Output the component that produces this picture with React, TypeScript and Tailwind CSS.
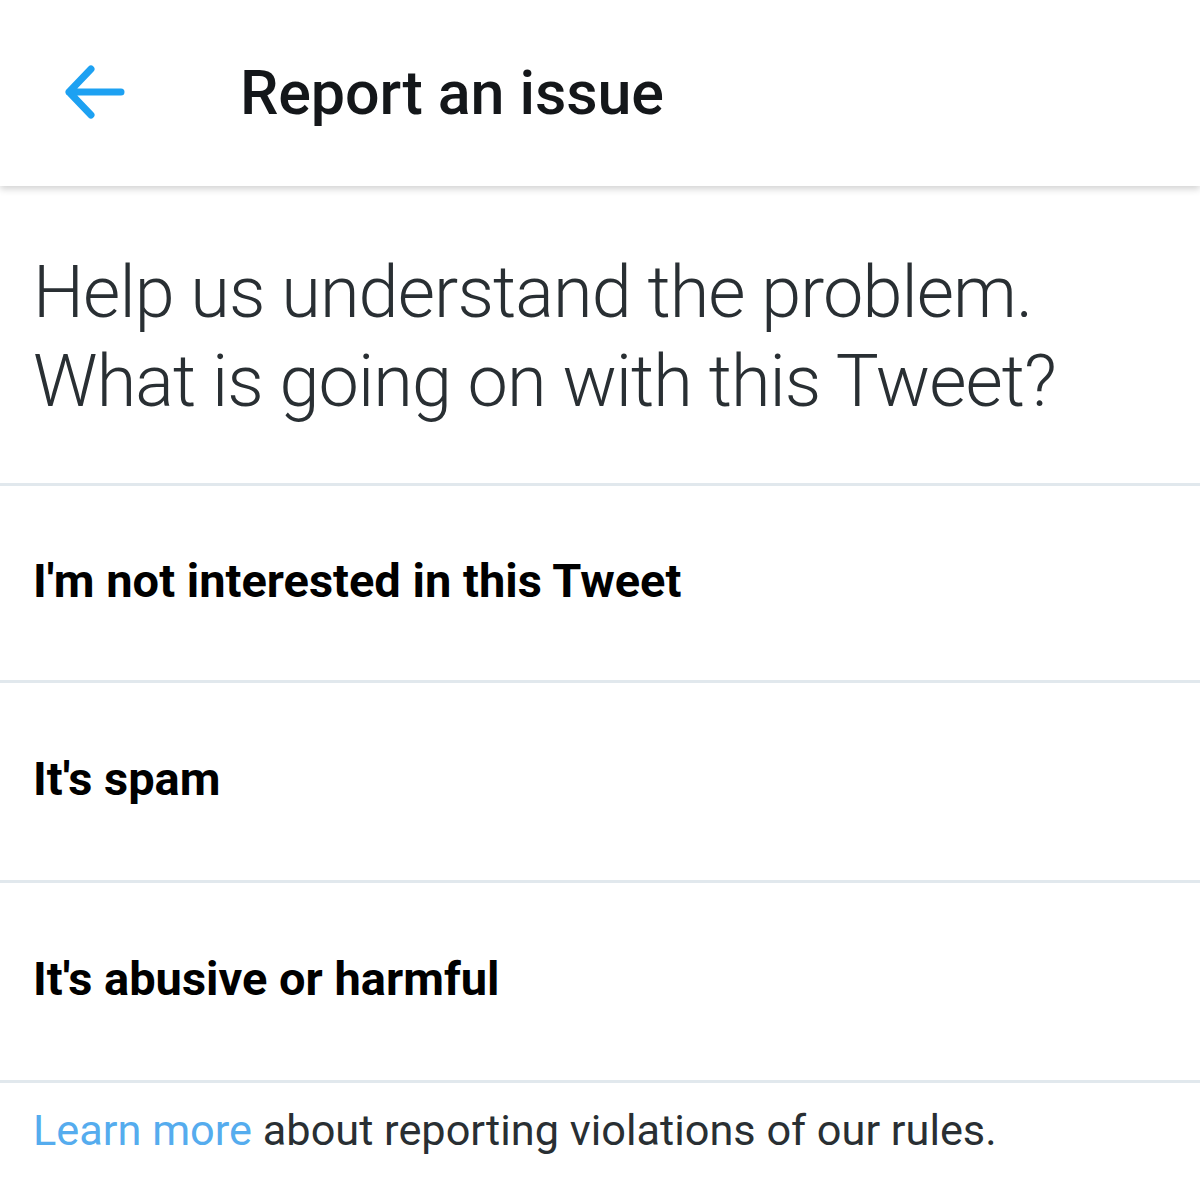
import React from 'react';

const options = [
  { label: "I'm not interested in this Tweet", row: 'h-[197px]' },
  { label: "It's spam", row: 'h-[200px]' },
  { label: "It's abusive or harmful", row: 'h-[200px]' },
];

const BackArrow: React.FC = () => (
  <svg width="64" height="56" viewBox="0 0 64 56" fill="none" className="shrink-0">
    <path
      d="M27 5 L5 28 L27 51 M5 28 H57"
      stroke="#1da1f2"
      strokeWidth="7"
      strokeLinecap="round"
      strokeLinejoin="round"
    />
  </svg>
);

export default function App() {
  return (
    <div className="w-[1200px] h-[1198px] bg-white overflow-hidden font-['Roboto',sans-serif]">
      {/* Header */}
      <div className="relative z-10 h-[186px] flex items-center bg-white shadow-[0_3px_7px_rgba(0,0,0,0.18)]">
        <div className="pl-[64px] pb-[2px]">
          <BackArrow />
        </div>
        <h1 className="ml-[112px] text-[61px] leading-none font-medium text-[#14171a] tracking-[-0.1px]">
          Report an issue
        </h1>
      </div>

      {/* Question */}
      <div className="px-[33px] pt-[62px] h-[300px] border-b-[3px] border-[#e1e8ed]">
        <p className="text-[72px] leading-[89px] font-light text-[#292f33] tracking-[-0.9px]">
          Help us understand the problem.
          <br />
          What is going on with this Tweet?
        </p>
      </div>

      {/* Options */}
      {options.map((o) => (
        <button
          key={o.label}
          className={`${o.row} w-full flex items-center px-[33px] pb-[6px] border-b-[3px] border-[#e1e8ed] text-left`}
        >
          <span className="text-[47px] leading-none font-bold text-black">{o.label}</span>
        </button>
      ))}

      {/* Footer */}
      <div className="px-[33px] pt-[21px]">
        <p className="text-[43.3px] leading-[53px] text-[#292f33]">
          <span className="text-[#55acee]">Learn more</span> about reporting violations of our rules.
        </p>
      </div>
    </div>
  );
}
